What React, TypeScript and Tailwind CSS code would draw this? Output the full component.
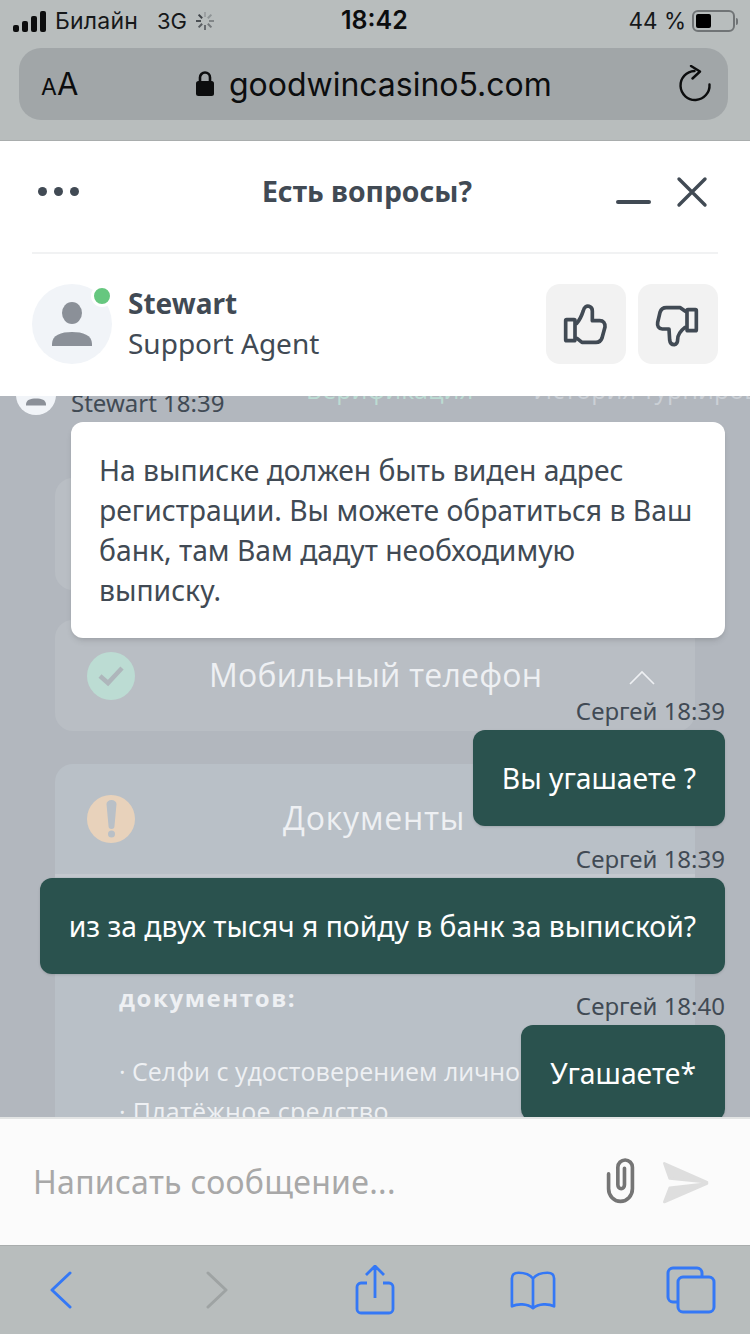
import React from 'react';

const Spinner = () => (
  <svg width="22" height="22" viewBox="0 0 22 22" className="ml-[7px]">
    {[0, 45, 90, 135, 180, 225, 270, 315].map((a, i) => (
      <line key={a} x1="11" y1="2" x2="11" y2="7" stroke="#30343a" strokeOpacity={0.2 + i * 0.1} strokeWidth="2" transform={`rotate(${a} 11 11)`} />
    ))}
  </svg>
);

const StatusBar = () => (
  <div className="relative flex h-[40px] items-center pt-[2px] pl-[13px] pr-[12px] font-['Inter',sans-serif] text-[23px] text-[#16181a]">
    <div className="flex items-end gap-[3px] h-[21px]">
      <span className="w-[6px] h-[7px] rounded-[2px] bg-[#0c0d0e]" />
      <span className="w-[6px] h-[11px] rounded-[2px] bg-[#0c0d0e]" />
      <span className="w-[6px] h-[16px] rounded-[2px] bg-[#0c0d0e]" />
      <span className="w-[6px] h-[21px] rounded-[2px] bg-[#0c0d0e]" />
    </div>
    <span className="ml-[9px] tracking-[0.2px]">Билайн</span>
    <span className="ml-[19px] text-[22px]">3G</span>
    <Spinner />
    <span className="absolute left-[341px] text-[25px] font-semibold text-[#0c0d0e]">18:42</span>
    <span className="ml-auto text-[22.5px]">44 %</span>
    <div className="ml-[6px] flex items-center">
      <div className="flex h-[22px] w-[43px] items-center rounded-[6px] border-[2px] border-[#707476] p-[2px]">
        <div className="h-[14px] w-[15px] rounded-[2px] bg-black" />
      </div>
      <span className="ml-[1px] h-[7px] w-[2px] rounded-r-[2px] bg-[#707476]" />
    </div>
  </div>
);

const UrlBar = () => (
  <div className="mx-[19px] mt-[8px] flex h-[72px] w-[709px] items-center rounded-[22px] bg-[#a1a6a8] font-['Inter',sans-serif] text-[#0c0d0e]">
    <span className="ml-[22px] flex items-baseline w-[154px]">
      <span className="text-[23px]">A</span>
      <span className="text-[31px]">A</span>
    </span>
    <svg width="20" height="28" viewBox="0 0 20 28" className="-mt-[1px]">
      <path d="M5 12V7.5a5 5 0 0 1 10 0V12" fill="none" stroke="#0c0d0e" strokeWidth="2.6" />
      <rect x="1" y="11" width="18" height="15" rx="2.5" fill="#0c0d0e" />
    </svg>
    <span className="ml-[14px] mt-[2px] text-[32px] tracking-[-0.02px] leading-none">goodwincasino5.com</span>
    <svg width="36" height="38" viewBox="0 0 36 38" className="ml-auto mr-[14px]">
      <path d="M31.5 19.5a14.5 14.5 0 1 1-15-13.5" fill="none" stroke="#0c0d0e" strokeWidth="2.4" strokeLinecap="round" />
      <path d="M13 1l9 5.5-7.5 7" fill="none" stroke="#0c0d0e" strokeWidth="2.4" strokeLinecap="round" strokeLinejoin="round" />
    </svg>
  </div>
);

const ChatHeader = () => (
  <div className="h-[256px] border-t-[1px] border-t-[#a9adad] bg-white px-[32px] font-['Noto_Sans',sans-serif] text-[#414a54]">
    <div className="flex h-[113px] items-center border-b-[2px] border-[#f1f2f3] pb-[10px]">
      <div className="flex w-[50px] gap-[7px] pl-[6px]">
        <span className="h-[9px] w-[9px] rounded-full bg-[#414a54]" />
        <span className="h-[9px] w-[9px] rounded-full bg-[#414a54]" />
        <span className="h-[9px] w-[9px] rounded-full bg-[#414a54]" />
      </div>
      <span className="ml-[180px] text-[28.3px] font-bold">Есть вопросы?</span>
      <span className="ml-auto mt-[20px] h-[4px] w-[35px] rounded-full bg-[#414a54]" />
      <svg width="32" height="32" viewBox="0 0 32 32" className="ml-[25px] mr-[10px]">
        <path d="M3 3l26 26M29 3L3 29" stroke="#414a54" strokeWidth="3.4" strokeLinecap="round" />
      </svg>
    </div>
    <div className="mt-[30px] flex items-center">
      <div className="relative flex h-[80px] w-[80px] items-center justify-center rounded-full bg-[#f1f4f8]">
        <svg width="40" height="56" viewBox="0 0 40 56" className="mt-[2px]">
          <ellipse cx="20" cy="16" rx="10" ry="11" fill="#8b9098" />
          <path d="M0 47c0-9 9-12 20-12s20 3 20 12v2H0z" fill="#8b9098" />
        </svg>
        <span className="absolute right-[-1px] top-[1px] h-[22px] w-[22px] rounded-full border-[3px] border-white bg-[#66c77f]" />
      </div>
      <div className="ml-[16px] -mt-[2px] flex flex-col">
        <span className="text-[28px] font-bold leading-[40px]">Stewart</span>
        <span className="text-[28px] leading-[40px]">Support Agent</span>
      </div>
      <button className="ml-auto h-[80px] w-[80px] rounded-[14px] bg-[#f2f2f2]">
        <svg width="80" height="80" viewBox="78 42 240 240">
          <rect x="137" y="149" width="28" height="63" rx="3" fill="none" stroke="#414a54" strokeWidth="11" />
          <path d="M170 160c8-8 14-20 20-38 3-12 10-15 17-13 7 2 10 8 10 14v29h22c11 0 17 8 16 19l-9 33c-3 8-9 13-18 13h-42l-15-12" fill="none" stroke="#414a54" strokeWidth="11" strokeLinecap="round" strokeLinejoin="round" />
        </svg>
      </button>
      <button className="ml-[12px] h-[80px] w-[80px] rounded-[14px] bg-[#f2f2f2]">
        <svg width="80" height="80" viewBox="354 42 240 240">
          <rect x="501" y="119" width="28" height="63" rx="3" fill="none" stroke="#414a54" strokeWidth="11" />
          <path d="M496 124l-15-11h-42c-10 0-16 5-19 14l-7 30c-2 11 3 20 14 20h20l2 33c1 9 7 14 14 14 7-1 10-7 10-16 0-12 4-22 22-36" fill="none" stroke="#414a54" strokeWidth="11" strokeLinecap="round" strokeLinejoin="round" />
        </svg>
      </button>
    </div>
  </div>
);

// the dimmed casino page that sits behind the chat
const BackgroundPage = () => (
  <div className="absolute inset-0 bg-[#b2b7be] font-['Open_Sans',sans-serif] text-[#eef0f3]">
    <div className="-mt-[26px] flex h-[40px] items-center text-[25px]">
      <span className="ml-[306px] text-[#bcdcd3]">Верификация</span>
      <span className="ml-[60px] whitespace-nowrap text-[#cbd0d6]">История турниров</span>
    </div>
    <div className="mt-[68px] ml-[55px] h-[112px] w-[640px] rounded-[18px] bg-[#b9bec4]" />
    <div className="mt-[30px] ml-[55px] flex h-[111px] w-[640px] rounded-[18px] bg-[#b9bec4] pl-[32px] pt-[32px]">
      <div className="flex h-[48px] w-[48px] items-center justify-center rounded-full bg-[#bcdcd3]">
        <svg width="26" height="22" viewBox="0 0 26 22">
          <path d="M2 11l8 7L24 3" fill="none" stroke="#aeb6bb" strokeWidth="4.5" />
        </svg>
      </div>
      <span className="ml-[74px] text-[32px] leading-[46px] tracking-[0.2px] whitespace-nowrap">Мобильный телефон</span>
      <svg width="26" height="15" viewBox="0 0 26 15" className="ml-[87px] mt-[18px]">
        <path d="M1 14L13 2l12 12" fill="none" stroke="#eef0f3" strokeWidth="1.6" />
      </svg>
    </div>
    <div className="mt-[33px] ml-[55px] h-[400px] w-[640px] rounded-t-[18px] bg-[#b9c0c7]">
      <div className="flex h-[113px] border-b-[3px] border-[#c3c8ce] pl-[32px] pt-[31px]">
        <div className="flex h-[48px] w-[48px] items-center justify-center rounded-full bg-[#e8d2bb]">
          <svg width="11" height="38" viewBox="0 0 11 38">
            <path d="M0.5 4a5 4 0 0 1 10 0L8.5 26a3 3 0 0 1-6 0z" fill="#b9c0c7" />
            <circle cx="5.5" cy="34" r="3.5" fill="#b9c0c7" />
          </svg>
        </div>
        <span className="ml-[148px] text-[32px] leading-[46px] tracking-[0.8px]">Документы</span>
      </div>
      <div className="pl-[64px] pt-[106px]">
        <div className="text-[24px] font-bold leading-[30px] tracking-[1.6px]">документов:</div>
        <div className="mt-[38px] text-[25px] leading-[40px] whitespace-nowrap">· Селфи с удостоверением личности</div>
        <div className="text-[25px] leading-[40px] tracking-[0.3px] whitespace-nowrap">· Платёжное средство</div>
      </div>
    </div>
  </div>
);

const Meta = ({ children }: { children: React.ReactNode }) => (
  <div className="h-[30px] text-[24px] leading-[30px] text-[#414a54]">{children}</div>
);

const SentBubble = ({ text }: { text: string }) => (
  <div className="flex h-[96px] items-center rounded-[12px] bg-[#2a524e] px-[29px] text-[28.3px] text-white shadow-sm whitespace-nowrap">
    {text}
  </div>
);

const ChatMessages = () => (
  <div className="relative flex-1 overflow-hidden">
    <BackgroundPage />
    <div className="absolute left-[16px] top-[-21px] flex h-[40px] w-[40px] items-center justify-center rounded-full bg-[#f1f4f8]">
      <svg width="20" height="28" viewBox="0 0 40 56">
        <ellipse cx="20" cy="16" rx="10" ry="11" fill="#8b9098" />
        <path d="M0 47c0-9 9-12 20-12s20 3 20 12v2H0z" fill="#8b9098" />
      </svg>
    </div>
    <div className="absolute inset-0 flex flex-col items-end pr-[25px] font-['Noto_Sans',sans-serif] *:shrink-0">
      <div className="-mt-[8px] h-[34px] w-[654px] text-[24px] leading-[30px] text-[#414a54]">Stewart 18:39</div>
      <div className="w-[654px] rounded-[12px] bg-white px-[28px] pt-[28px] pb-[28px] text-[28.3px] leading-[40px] text-[#414a54] shadow-md">
        На выписке должен быть виден адрес регистрации. Вы можете обратиться в Ваш банк, там Вам дадут необходимую выписку.
      </div>
      <div className="mt-[58px]"><Meta>Сергей 18:39</Meta></div>
      <div className="mt-[4px]"><SentBubble text="Вы угашаете ?" /></div>
      <div className="mt-[18px]"><Meta>Сергей 18:39</Meta></div>
      <div className="mt-[4px]"><SentBubble text="из за двух тысяч я пойду в банк за выпиской?" /></div>
      <div className="mt-[17px]"><Meta>Сергей 18:40</Meta></div>
      <div className="mt-[4px]"><SentBubble text="Угашаете*" /></div>
    </div>
  </div>
);

const InputBar = () => (
  <div className="relative flex h-[128px] items-center border-t-[2px] border-[#e2e4e4] bg-[#fbfbfb] pl-[33px] pr-[38px] font-['Noto_Sans',sans-serif]">
    <span className="text-[32px] tracking-[0.3px] text-[#a8a8a8]">Написать сообщение...</span>
    <svg width="31" height="48" viewBox="80 44 92 145" className="ml-auto -mt-[2px]">
      <path d="M90 95V140A36 38 0 0 0 162 140V75A22 22 0 0 0 118 75V128A10 12 0 0 0 138 128V78" fill="none" stroke="#757575" strokeWidth="11" strokeLinecap="round" />
    </svg>
    <svg width="52" height="47" viewBox="245 55 155 140" className="ml-[24px]">
      <path d="M258 68L385 124L274 113Z" fill="#dedede" stroke="#dedede" strokeWidth="8" strokeLinejoin="round" />
      <path d="M385 128L274 141L258 183Z" fill="#dedede" stroke="#dedede" strokeWidth="8" strokeLinejoin="round" />
    </svg>
  </div>
);

const SafariToolbar = () => (
  <div className="flex h-[89px] items-center border-t-[1px] border-[#a9adad] bg-[#b8bdbd]">
    <svg width="26" height="38" viewBox="0 0 26 38" className="ml-[48px]">
      <path d="M22 2L4 19l18 17" fill="none" stroke="#3478f6" strokeWidth="3" strokeLinecap="round" strokeLinejoin="round" />
    </svg>
    <svg width="26" height="38" viewBox="0 0 26 38" className="ml-[130px]">
      <path d="M4 2l18 17L4 36" fill="none" stroke="#9ea3a3" strokeWidth="3" strokeLinecap="round" strokeLinejoin="round" />
    </svg>
    <svg width="40" height="50" viewBox="0 0 40 50" className="ml-[125px]">
      <path d="M12 18H6a4 4 0 0 0-4 4v22a4 4 0 0 0 4 4h28a4 4 0 0 0 4-4V22a4 4 0 0 0-4-4h-6" fill="none" stroke="#3478f6" strokeWidth="2.8" />
      <path d="M20 33V2M11 10l9-9 9 9" fill="none" stroke="#3478f6" strokeWidth="2.8" strokeLinejoin="round" />
    </svg>
    <svg width="46" height="40" viewBox="0 0 48 40" className="ml-[115px]">
      <path d="M24 8C20 3 14 2 9 2 5 2 2 4 2 8v29c6-3 16-3 22 2 6-5 16-5 22-2V8c0-4-3-6-7-6-5 0-11 1-15 6zM24 8v31" fill="none" stroke="#3478f6" strokeWidth="2.8" strokeLinejoin="round" />
    </svg>
    <svg width="50" height="48" viewBox="0 0 50 48" className="ml-[110px]">
      <path d="M11 36H7a5 5 0 0 1-5-5V7a5 5 0 0 1 5-5h24a5 5 0 0 1 5 5v4" fill="none" stroke="#3478f6" strokeWidth="3" />
      <rect x="12" y="11" width="36" height="35" rx="5" fill="none" stroke="#3478f6" strokeWidth="3" />
    </svg>
  </div>
);

export default function App() {
  return (
    <div className="flex h-[1334px] w-[750px] flex-col overflow-hidden bg-[#b8bdbd]">
      <div className="h-[140px] shrink-0">
        <StatusBar />
        <UrlBar />
      </div>
      <ChatHeader />
      <ChatMessages />
      <InputBar />
      <SafariToolbar />
    </div>
  );
}
